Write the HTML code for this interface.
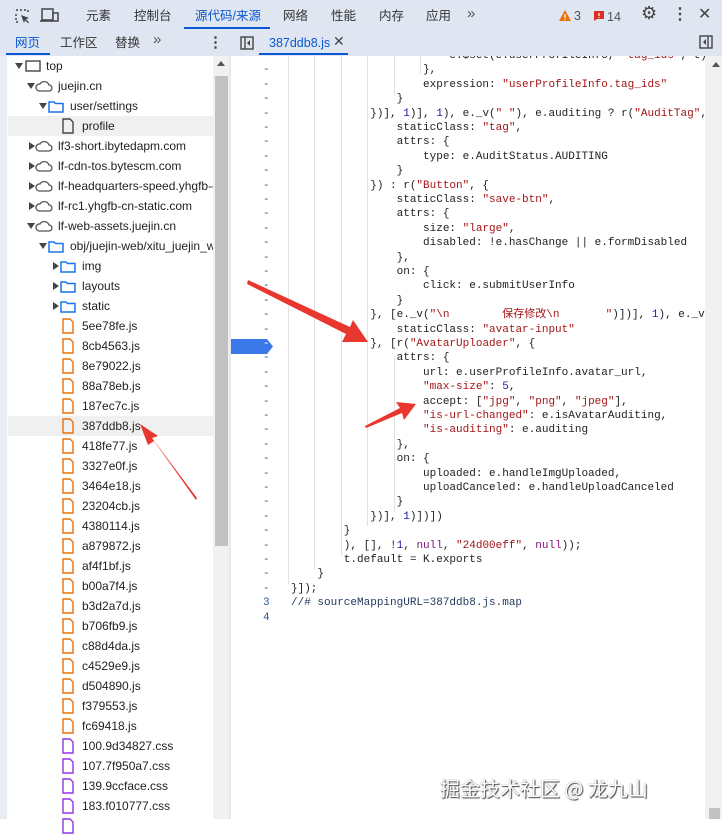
<!DOCTYPE html>
<html><head><meta charset="utf-8">
<style>
*{margin:0;padding:0;box-sizing:border-box}
body{width:722px;height:819px;overflow:hidden;background:#fff;position:relative;font-family:"Liberation Sans","Noto Sans CJK SC",sans-serif;font-size:12px;color:#1f1f1f}
.a{position:absolute;white-space:nowrap}
.top{position:absolute;left:0;top:0;width:722px;height:56px;background:#dfe6f1}
.t1{font-size:12.5px;color:#333;line-height:16px}
.blue{color:#0b57d0}
.tree .r{position:absolute;left:8px;width:205px;height:20px;line-height:20px;overflow:hidden}
.tree .r span{position:absolute;top:0;white-space:nowrap}
.tri{position:absolute;width:0;height:0}
.td{border-left:4px solid transparent;border-right:4px solid transparent;border-top:6px solid #444;top:7px}
.tr{border-top:4px solid transparent;border-bottom:4px solid transparent;border-left:6px solid #444;top:6px}
.code{position:absolute;left:231px;top:56px;width:474px;height:763px;overflow:hidden;font-family:"Liberation Mono","Noto Sans CJK SC",monospace;font-size:11px;color:#222}
.ln{position:absolute;left:0;height:14.4px;line-height:14.4px;width:474px;white-space:pre}
.n{position:absolute;left:32px;color:#2a5a9a}
.c{position:absolute;left:60px}
.s{color:#a31515}.m{color:#1a1aa6}.k{color:#881280}.cm{color:#233c5e}
.g{position:absolute;width:1px;background:#e2e2e2}
</style></head><body>
<div class="top"></div>
<svg class="a" style="left:14px;top:8px" width="18" height="18" viewBox="0 0 18 18"><path d="M2 2h2M6 2h2M10 2h2M2 6v2M2 10v2M2 14h2M14 2v2" stroke="#444" stroke-width="1.5" fill="none"/><path d="M7 7l8 3-3 1.2 3 3-1 1-3-3L10 15z" fill="#444"/></svg>
<svg class="a" style="left:40px;top:8px" width="20" height="16" viewBox="0 0 20 16"><rect x="2" y="1" width="11" height="11" fill="none" stroke="#444" stroke-width="1.5"/><rect x="13" y="5" width="5" height="8" fill="#dfe6f1" stroke="#444" stroke-width="1.5"/><path d="M0 13h13" stroke="#444" stroke-width="1.5"/></svg>
<div class="a t1" style="left:86px;top:8px">元素</div>
<div class="a t1" style="left:134px;top:8px">控制台</div>
<div class="a t1 blue" style="left:195px;top:8px">源代码/来源</div>
<div class="a" style="left:184px;top:27px;width:86px;height:2px;background:#0b57d0"></div>
<div class="a t1" style="left:283px;top:8px">网络</div>
<div class="a t1" style="left:331px;top:8px">性能</div>
<div class="a t1" style="left:379px;top:8px">内存</div>
<div class="a t1" style="left:426px;top:8px">应用</div>
<div class="a t1" style="left:467px;top:6px;font-size:15px;color:#555">»</div>
<svg class="a" style="left:558px;top:9px" width="14" height="13"><path d="M7 1L13 12H1z" fill="#e8710a"/><path d="M7 5v4M7 10v1" stroke="#fff" stroke-width="1.3"/></svg>
<div class="a t1" style="left:574px;top:8px;color:#555">3</div>
<svg class="a" style="left:593px;top:10px" width="12" height="12"><path d="M1 1h10v8H4l-3 2z" fill="#d93025"/><path d="M6 3v3M6 7v1" stroke="#fff" stroke-width="1.2"/></svg>
<div class="a t1" style="left:607px;top:9px;color:#555">14</div>
<div class="a" style="left:641px;top:3px;font-size:18px;color:#444">⚙</div>
<div class="a" style="left:672px;top:4px;font-size:16px;color:#444;font-weight:bold">⋮</div>
<div class="a" style="left:698px;top:4px;font-size:16px;color:#444">✕</div>
<div class="a t1 blue" style="left:15px;top:35px">网页</div>
<div class="a" style="left:6px;top:53px;width:44px;height:2px;background:#0b57d0"></div>
<div class="a t1" style="left:60px;top:35px">工作区</div>
<div class="a t1" style="left:115px;top:35px">替换</div>
<div class="a t1" style="left:153px;top:32px;font-size:15px;color:#555">»</div>
<div class="a" style="left:208px;top:33px;font-size:15px;color:#444;font-weight:bold">⋮</div>
<svg class="a" style="left:240px;top:36px" width="14" height="14"><rect x="1" y="1" width="12" height="12" fill="none" stroke="#444" stroke-width="1.4"/><path d="M5 1v12" stroke="#444" stroke-width="1.4"/><path d="M10 4v6L7 7z" fill="#444"/></svg>
<div class="a t1 blue" style="left:269px;top:35px">387ddb8.js</div>
<div class="a" style="left:333px;top:33px;font-size:14px;color:#444">✕</div>
<div class="a" style="left:259px;top:53px;width:89px;height:2px;background:#0b57d0"></div>
<svg class="a" style="left:699px;top:35px" width="14" height="14"><rect x="1" y="1" width="12" height="12" fill="none" stroke="#444" stroke-width="1.4"/><path d="M9 1v12" stroke="#444" stroke-width="1.4"/><path d="M7 4v6L4 7z" fill="#444"/></svg>

<div class="a" style="left:0;top:56px;width:7px;height:763px;background:#e9ecf0"></div>
<div class="a" style="left:213px;top:56px;width:16px;height:763px;background:#f1f1f1"></div>
<div class="a" style="left:215px;top:76px;width:13px;height:470px;background:#c1c1c1"></div>
<div class="a" style="left:217px;top:61px;width:0;height:0;border-left:4px solid transparent;border-right:4px solid transparent;border-bottom:5px solid #555"></div>
<div class="a" style="left:229px;top:56px;width:2px;height:763px;background:#e6e9ef"></div>
<div class="a" style="left:8px;top:116px;width:205px;height:20px;background:#f0f0f0"></div>
<div class="a" style="left:8px;top:416px;width:205px;height:20px;background:#f0f0f0"></div>

<svg width="0" height="0" style="position:absolute"><defs>
<symbol id="cl" viewBox="0 0 18 12"><path d="M4 11h10a3 3 0 0 0 0-6 5 5 0 0 0-9-1 3.5 3.5 0 0 0-1 7z" fill="none" stroke="#555" stroke-width="1.3"/></symbol>
<symbol id="fo" viewBox="0 0 16 13"><path d="M1 2h5l1.5 1.5H15V12H1z" fill="none" stroke="#1a73e8" stroke-width="1.5"/></symbol>
<symbol id="fj" viewBox="0 0 12 16"><path d="M1 1h7l3 3v11H1z" fill="none" stroke="#e8710a" stroke-width="1.4"/></symbol>
<symbol id="fc" viewBox="0 0 12 16"><path d="M1 1h7l3 3v11H1z" fill="none" stroke="#9334e6" stroke-width="1.4"/></symbol>
<symbol id="fp" viewBox="0 0 12 16"><path d="M1 1h7l3 3v11H1z" fill="none" stroke="#444" stroke-width="1.4"/></symbol>
</defs></svg>

<div class="tree">
<div class="r" style="top:56px"><i class="tri td" style="left:7px"></i><svg class="a" style="left:17px;top:4px" width="16" height="12"><rect x="1" y="1" width="14" height="10" fill="none" stroke="#444" stroke-width="1.4"/></svg><span style="left:38px">top</span></div>
<div class="r" style="top:76px"><i class="tri td" style="left:19px"></i><svg class="a" style="left:27px;top:4px" width="18" height="12"><use href="#cl"/></svg><span style="left:50px">juejin.cn</span></div>
<div class="r" style="top:96px"><i class="tri td" style="left:31px"></i><svg class="a" style="left:40px;top:4px" width="16" height="13"><use href="#fo"/></svg><span style="left:62px">user/settings</span></div>
<div class="r" style="top:116px"><svg class="a" style="left:54px;top:2px" width="12" height="16"><use href="#fp"/></svg><span style="left:74px">profile</span></div>
<div class="r" style="top:136px"><i class="tri tr" style="left:21px"></i><svg class="a" style="left:27px;top:4px" width="18" height="12"><use href="#cl"/></svg><span style="left:50px">lf3-short.ibytedapm.com</span></div>
<div class="r" style="top:156px"><i class="tri tr" style="left:21px"></i><svg class="a" style="left:27px;top:4px" width="18" height="12"><use href="#cl"/></svg><span style="left:50px">lf-cdn-tos.bytescm.com</span></div>
<div class="r" style="top:176px"><i class="tri tr" style="left:21px"></i><svg class="a" style="left:27px;top:4px" width="18" height="12"><use href="#cl"/></svg><span style="left:50px">lf-headquarters-speed.yhgfb-cn</span></div>
<div class="r" style="top:196px"><i class="tri tr" style="left:21px"></i><svg class="a" style="left:27px;top:4px" width="18" height="12"><use href="#cl"/></svg><span style="left:50px">lf-rc1.yhgfb-cn-static.com</span></div>
<div class="r" style="top:216px"><i class="tri td" style="left:19px"></i><svg class="a" style="left:27px;top:4px" width="18" height="12"><use href="#cl"/></svg><span style="left:50px">lf-web-assets.juejin.cn</span></div>
<div class="r" style="top:236px"><i class="tri td" style="left:31px"></i><svg class="a" style="left:40px;top:4px" width="16" height="13"><use href="#fo"/></svg><span style="left:62px">obj/juejin-web/xitu_juejin_web</span></div>
<div class="r" style="top:256px"><i class="tri tr" style="left:45px"></i><svg class="a" style="left:52px;top:4px" width="16" height="13"><use href="#fo"/></svg><span style="left:74px">img</span></div>
<div class="r" style="top:276px"><i class="tri tr" style="left:45px"></i><svg class="a" style="left:52px;top:4px" width="16" height="13"><use href="#fo"/></svg><span style="left:74px">layouts</span></div>
<div class="r" style="top:296px"><i class="tri tr" style="left:45px"></i><svg class="a" style="left:52px;top:4px" width="16" height="13"><use href="#fo"/></svg><span style="left:74px">static</span></div>
<div class="r" style="top:316px"><svg class="a" style="left:54px;top:2px" width="12" height="16"><use href="#fj"/></svg><span style="left:74px">5ee78fe.js</span></div>
<div class="r" style="top:336px"><svg class="a" style="left:54px;top:2px" width="12" height="16"><use href="#fj"/></svg><span style="left:74px">8cb4563.js</span></div>
<div class="r" style="top:356px"><svg class="a" style="left:54px;top:2px" width="12" height="16"><use href="#fj"/></svg><span style="left:74px">8e79022.js</span></div>
<div class="r" style="top:376px"><svg class="a" style="left:54px;top:2px" width="12" height="16"><use href="#fj"/></svg><span style="left:74px">88a78eb.js</span></div>
<div class="r" style="top:396px"><svg class="a" style="left:54px;top:2px" width="12" height="16"><use href="#fj"/></svg><span style="left:74px">187ec7c.js</span></div>
<div class="r" style="top:416px"><svg class="a" style="left:54px;top:2px" width="12" height="16"><use href="#fj"/></svg><span style="left:74px">387ddb8.js</span></div>
<div class="r" style="top:436px"><svg class="a" style="left:54px;top:2px" width="12" height="16"><use href="#fj"/></svg><span style="left:74px">418fe77.js</span></div>
<div class="r" style="top:456px"><svg class="a" style="left:54px;top:2px" width="12" height="16"><use href="#fj"/></svg><span style="left:74px">3327e0f.js</span></div>
<div class="r" style="top:476px"><svg class="a" style="left:54px;top:2px" width="12" height="16"><use href="#fj"/></svg><span style="left:74px">3464e18.js</span></div>
<div class="r" style="top:496px"><svg class="a" style="left:54px;top:2px" width="12" height="16"><use href="#fj"/></svg><span style="left:74px">23204cb.js</span></div>
<div class="r" style="top:516px"><svg class="a" style="left:54px;top:2px" width="12" height="16"><use href="#fj"/></svg><span style="left:74px">4380114.js</span></div>
<div class="r" style="top:536px"><svg class="a" style="left:54px;top:2px" width="12" height="16"><use href="#fj"/></svg><span style="left:74px">a879872.js</span></div>
<div class="r" style="top:556px"><svg class="a" style="left:54px;top:2px" width="12" height="16"><use href="#fj"/></svg><span style="left:74px">af4f1bf.js</span></div>
<div class="r" style="top:576px"><svg class="a" style="left:54px;top:2px" width="12" height="16"><use href="#fj"/></svg><span style="left:74px">b00a7f4.js</span></div>
<div class="r" style="top:596px"><svg class="a" style="left:54px;top:2px" width="12" height="16"><use href="#fj"/></svg><span style="left:74px">b3d2a7d.js</span></div>
<div class="r" style="top:616px"><svg class="a" style="left:54px;top:2px" width="12" height="16"><use href="#fj"/></svg><span style="left:74px">b706fb9.js</span></div>
<div class="r" style="top:636px"><svg class="a" style="left:54px;top:2px" width="12" height="16"><use href="#fj"/></svg><span style="left:74px">c88d4da.js</span></div>
<div class="r" style="top:656px"><svg class="a" style="left:54px;top:2px" width="12" height="16"><use href="#fj"/></svg><span style="left:74px">c4529e9.js</span></div>
<div class="r" style="top:676px"><svg class="a" style="left:54px;top:2px" width="12" height="16"><use href="#fj"/></svg><span style="left:74px">d504890.js</span></div>
<div class="r" style="top:696px"><svg class="a" style="left:54px;top:2px" width="12" height="16"><use href="#fj"/></svg><span style="left:74px">f379553.js</span></div>
<div class="r" style="top:716px"><svg class="a" style="left:54px;top:2px" width="12" height="16"><use href="#fj"/></svg><span style="left:74px">fc69418.js</span></div>
<div class="r" style="top:736px"><svg class="a" style="left:54px;top:2px" width="12" height="16"><use href="#fc"/></svg><span style="left:74px">100.9d34827.css</span></div>
<div class="r" style="top:756px"><svg class="a" style="left:54px;top:2px" width="12" height="16"><use href="#fc"/></svg><span style="left:74px">107.7f950a7.css</span></div>
<div class="r" style="top:776px"><svg class="a" style="left:54px;top:2px" width="12" height="16"><use href="#fc"/></svg><span style="left:74px">139.9ccface.css</span></div>
<div class="r" style="top:796px"><svg class="a" style="left:54px;top:2px" width="12" height="16"><use href="#fc"/></svg><span style="left:74px">183.f010777.css</span></div>
<div class="r" style="top:816px"><svg class="a" style="left:54px;top:2px" width="12" height="16"><use href="#fc"/></svg></div>
</div>

<div class="code">
<div class="g" style="left:57px;top:0;height:528px"></div>
<div class="g" style="left:83px;top:0;height:514px"></div>
<div class="g" style="left:110px;top:0;height:500px"></div>
<div class="g" style="left:136px;top:0;height:470px"></div>
<div class="g" style="left:163px;top:300px;height:156px"></div>
<div class="g" style="left:163px;top:0;height:40px"></div>
<div class="g" style="left:189px;top:0;height:18px"></div>
<div class="a" style="left:0;top:283px;width:42px;height:15px;background:#3b78e7;clip-path:polygon(0 0,36px 0,42px 50%,36px 100%,0 100%)"></div>
<div style="position:absolute;left:0;top:-7px;width:474px">
<div class="ln" style="top:0px"><span class="n">-</span><span class="c">                        e.$set(e.userProfileInfo, <span class="s">"tag_ids"</span>, t)</span></div>
<div class="ln" style="top:14.4px"><span class="n">-</span><span class="c">                    },</span></div>
<div class="ln" style="top:28.8px"><span class="n">-</span><span class="c">                    expression: <span class="s">"userProfileInfo.tag_ids"</span></span></div>
<div class="ln" style="top:43.2px"><span class="n">-</span><span class="c">                }</span></div>
<div class="ln" style="top:57.6px"><span class="n">-</span><span class="c">            })], <span class="m">1</span>)], <span class="m">1</span>), e._v(<span class="s">" "</span>), e.auditing ? r(<span class="s">"AuditTag"</span>, {</span></div>
<div class="ln" style="top:72px"><span class="n">-</span><span class="c">                staticClass: <span class="s">"tag"</span>,</span></div>
<div class="ln" style="top:86.4px"><span class="n">-</span><span class="c">                attrs: {</span></div>
<div class="ln" style="top:100.8px"><span class="n">-</span><span class="c">                    type: e.AuditStatus.AUDITING</span></div>
<div class="ln" style="top:115.2px"><span class="n">-</span><span class="c">                }</span></div>
<div class="ln" style="top:129.6px"><span class="n">-</span><span class="c">            }) : r(<span class="s">"Button"</span>, {</span></div>
<div class="ln" style="top:144px"><span class="n">-</span><span class="c">                staticClass: <span class="s">"save-btn"</span>,</span></div>
<div class="ln" style="top:158.4px"><span class="n">-</span><span class="c">                attrs: {</span></div>
<div class="ln" style="top:172.8px"><span class="n">-</span><span class="c">                    size: <span class="s">"large"</span>,</span></div>
<div class="ln" style="top:187.2px"><span class="n">-</span><span class="c">                    disabled: !e.hasChange || e.formDisabled</span></div>
<div class="ln" style="top:201.6px"><span class="n">-</span><span class="c">                },</span></div>
<div class="ln" style="top:216px"><span class="n">-</span><span class="c">                on: {</span></div>
<div class="ln" style="top:230.4px"><span class="n">-</span><span class="c">                    click: e.submitUserInfo</span></div>
<div class="ln" style="top:244.8px"><span class="n">-</span><span class="c">                }</span></div>
<div class="ln" style="top:259.2px"><span class="n">-</span><span class="c">            }, [e._v(<span class="s">"\n        保存修改\n       "</span>)])], <span class="m">1</span>), e._v(</span></div>
<div class="ln" style="top:273.6px"><span class="n">-</span><span class="c">                staticClass: <span class="s">"avatar-input"</span></span></div>
<div class="ln" style="top:288px"><span class="n" style="color:#fff">-</span><span class="c">            }, [r(<span class="s">"AvatarUploader"</span>, {</span></div>
<div class="ln" style="top:302.4px"><span class="n">-</span><span class="c">                attrs: {</span></div>
<div class="ln" style="top:316.8px"><span class="n">-</span><span class="c">                    url: e.userProfileInfo.avatar_url,</span></div>
<div class="ln" style="top:331.2px"><span class="n">-</span><span class="c">                    <span class="s">"max-size"</span>: <span class="m">5</span>,</span></div>
<div class="ln" style="top:345.6px"><span class="n">-</span><span class="c">                    accept: [<span class="s">"jpg"</span>, <span class="s">"png"</span>, <span class="s">"jpeg"</span>],</span></div>
<div class="ln" style="top:360px"><span class="n">-</span><span class="c">                    <span class="s">"is-url-changed"</span>: e.isAvatarAuditing,</span></div>
<div class="ln" style="top:374.4px"><span class="n">-</span><span class="c">                    <span class="s">"is-auditing"</span>: e.auditing</span></div>
<div class="ln" style="top:388.8px"><span class="n">-</span><span class="c">                },</span></div>
<div class="ln" style="top:403.2px"><span class="n">-</span><span class="c">                on: {</span></div>
<div class="ln" style="top:417.6px"><span class="n">-</span><span class="c">                    uploaded: e.handleImgUploaded,</span></div>
<div class="ln" style="top:432px"><span class="n">-</span><span class="c">                    uploadCanceled: e.handleUploadCanceled</span></div>
<div class="ln" style="top:446.4px"><span class="n">-</span><span class="c">                }</span></div>
<div class="ln" style="top:460.8px"><span class="n">-</span><span class="c">            })], <span class="m">1</span>)])])</span></div>
<div class="ln" style="top:475.2px"><span class="n">-</span><span class="c">        }</span></div>
<div class="ln" style="top:489.6px"><span class="n">-</span><span class="c">        ), [], !<span class="m">1</span>, <span class="k">null</span>, <span class="s">"24d00eff"</span>, <span class="k">null</span>));</span></div>
<div class="ln" style="top:504px"><span class="n">-</span><span class="c">        t.default = K.exports</span></div>
<div class="ln" style="top:518.4px"><span class="n">-</span><span class="c">    }</span></div>
<div class="ln" style="top:532.8px"><span class="n">-</span><span class="c">}]);</span></div>
<div class="ln" style="top:547.2px"><span class="n">3</span><span class="c cm">//# sourceMappingURL=387ddb8.js.map</span></div>
<div class="ln" style="top:561.6px"><span class="n">4</span><span class="c"></span></div>
</div>
</div>
<div class="a" style="left:705px;top:56px;width:17px;height:763px;background:#f1f1f1"></div>
<div class="a" style="left:712px;top:62px;width:0;height:0;border-left:4px solid transparent;border-right:4px solid transparent;border-bottom:5px solid #555"></div>
<div class="a" style="left:709px;top:808px;width:11px;height:11px;background:#c1c1c1"></div>

<svg class="a" style="left:0;top:0" width="722" height="819">
<g fill="#e8372e">
<polygon points="248,280 350,327 353,320 368,342 342,342 346,334 247,284"/>
<polygon points="365,426 400,408 396,402 416,404 404,420 402,413 366,428"/>
<polygon points="196,500 154,441 148,445 140,424 158,436 152,438 197,498"/>
</g>
</svg>
<div class="a" style="left:440px;top:773px;font-size:20px;color:#fff;font-family:'Noto Sans CJK SC',sans-serif;text-shadow:1px 1px 1px #444,0 0 1px #666">掘金技术社区 @ 龙九山</div>
</body></html>
